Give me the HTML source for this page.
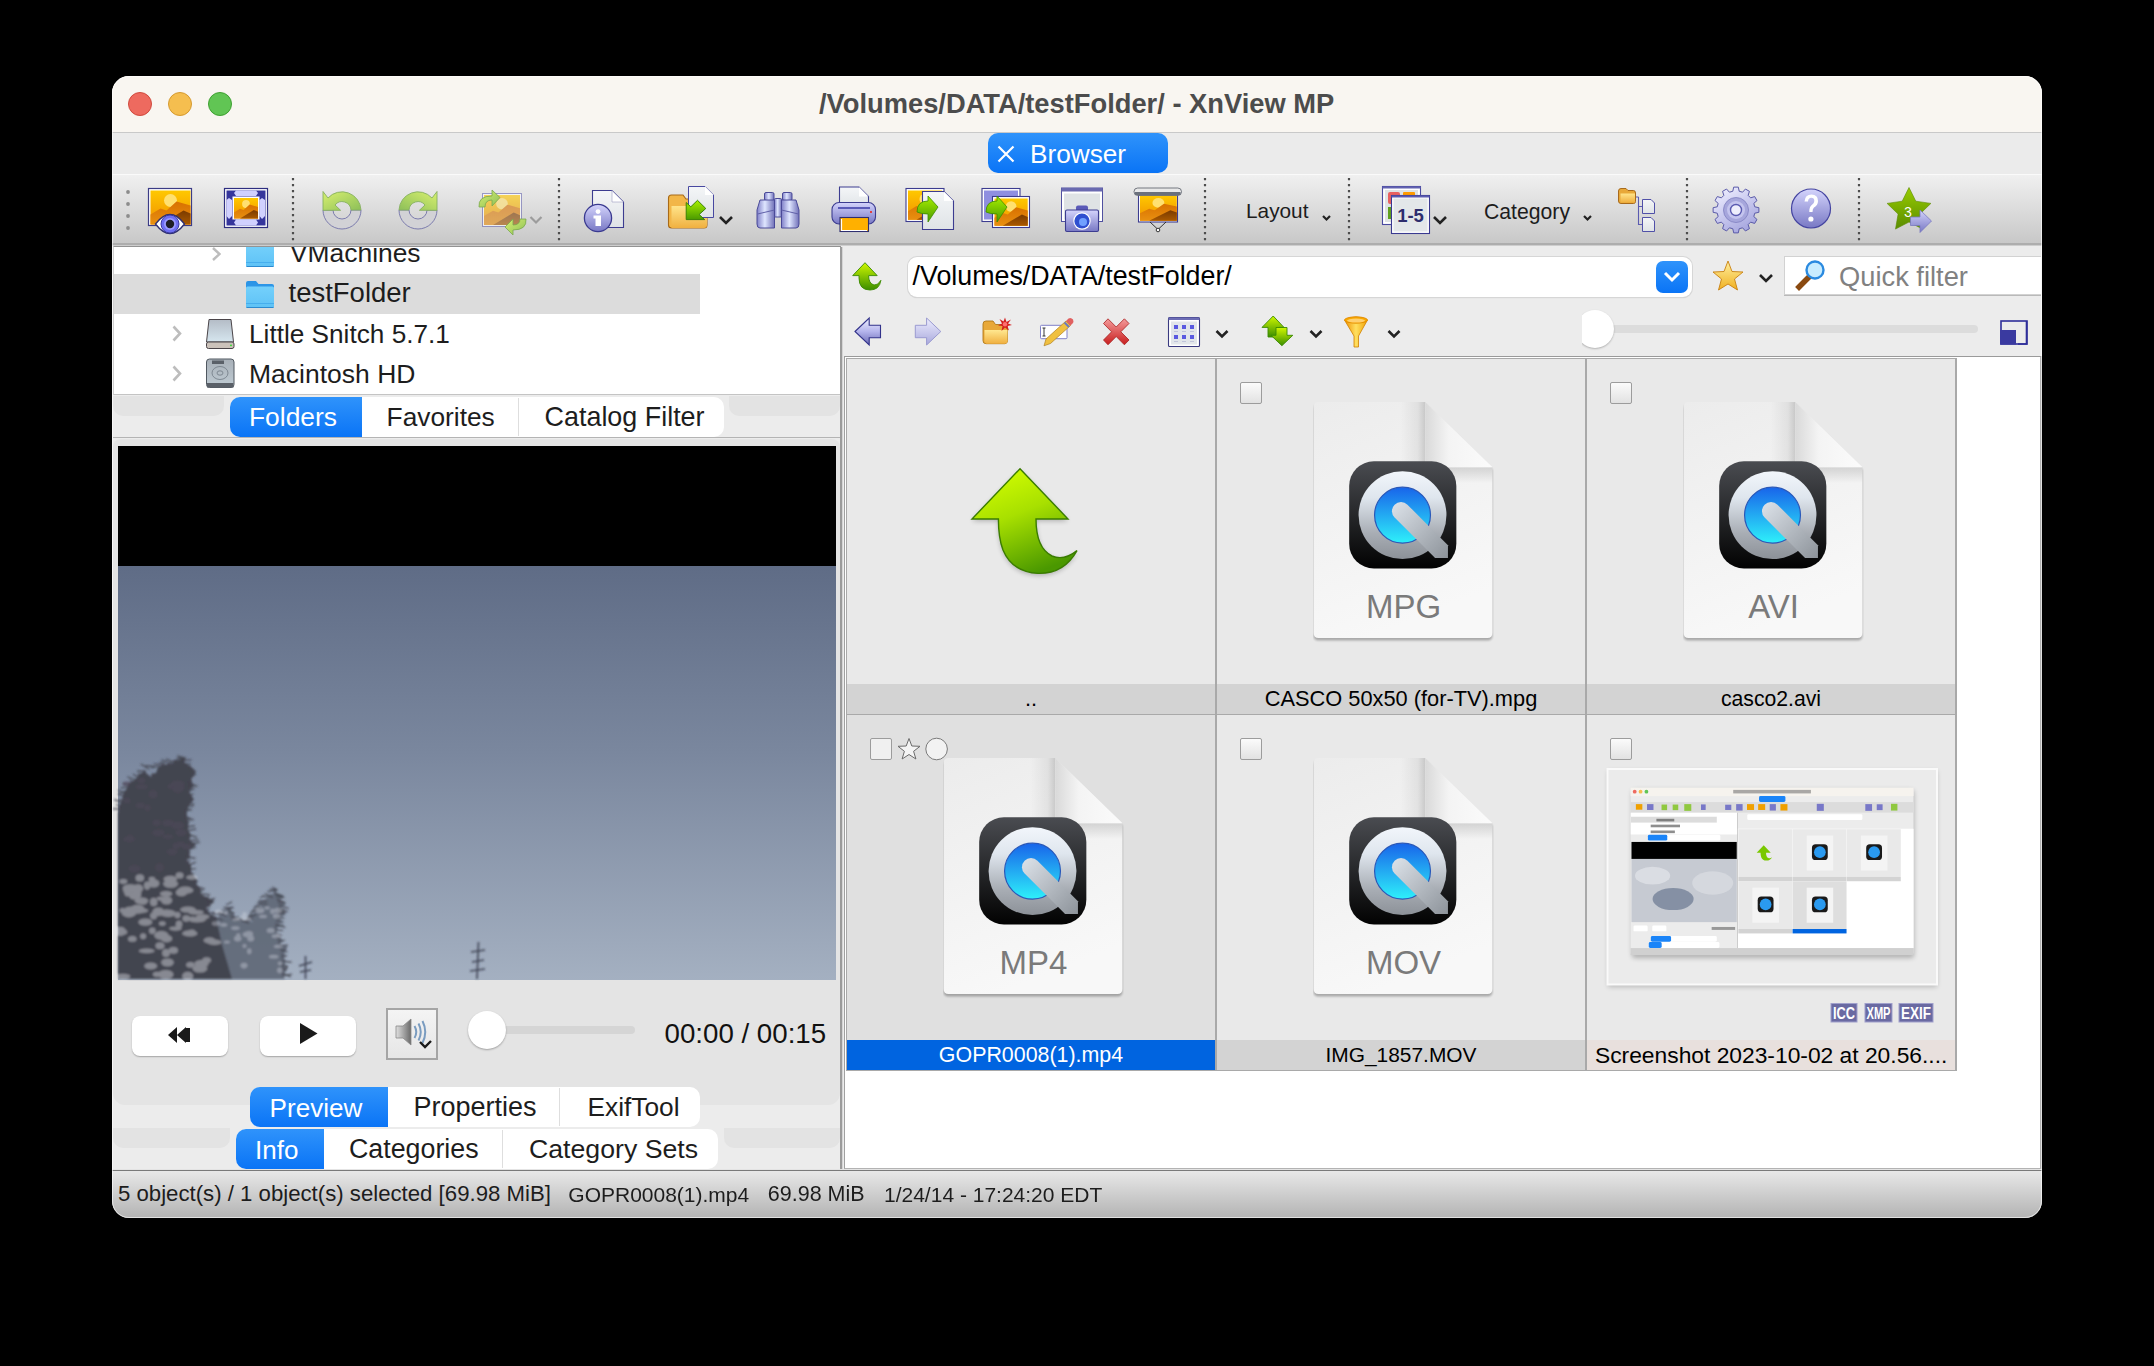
<!DOCTYPE html>
<html><head><meta charset="utf-8">
<style>
*{margin:0;padding:0;box-sizing:border-box}
html,body{width:2154px;height:1366px;background:#000;overflow:hidden;font-family:"Liberation Sans",sans-serif;color:#1d1d1d}
.a{position:absolute}
svg.a{overflow:visible}
#win{position:absolute;left:0;top:0;width:2154px;height:1366px;clip-path:inset(76px 112px 148px 112px round 17px)}
.t{position:absolute;white-space:nowrap;line-height:1}
.blue{background:linear-gradient(#2f93fb,#0a74f6)}
.lbl{position:absolute;height:30px;font-size:21.8px;line-height:30px;text-align:center;white-space:nowrap;color:#000}
.cell{position:absolute;background:#e9e9e9}
.cb{position:absolute;width:22px;height:22px;border:1px solid #9c9c9c;border-radius:2px;background:linear-gradient(#fbfbfb,#e2e2e2)}
.vsep{position:absolute;top:179px;height:62px;border-left:3px dotted #4a4a4a}
</style></head><body>
<svg width="0" height="0" style="position:absolute">
<defs>
  <linearGradient id="gPage" x1="0" y1="0" x2="0.3" y2="1"><stop offset="0" stop-color="#ececec"/><stop offset="1" stop-color="#f8f8f8"/></linearGradient>
  <linearGradient id="gFold" x1="0" y1="0" x2="1" y2="0"><stop offset="0" stop-color="#d9d9d9"/><stop offset="0.35" stop-color="#f4f4f4"/><stop offset="1" stop-color="#fbfbfb"/></linearGradient>
  <linearGradient id="gBlack" x1="0" y1="0" x2="0" y2="1"><stop offset="0" stop-color="#4a4c51"/><stop offset="1" stop-color="#020202"/></linearGradient>
  <linearGradient id="gRing" x1="0" y1="0" x2="0" y2="1"><stop offset="0" stop-color="#f2f6fb"/><stop offset="0.3" stop-color="#dfe6ee"/><stop offset="0.7" stop-color="#a9aeb5"/><stop offset="1" stop-color="#8c9198"/></linearGradient>
  <linearGradient id="gBlue" x1="0" y1="0" x2="0" y2="1"><stop offset="0" stop-color="#1864ea"/><stop offset="1" stop-color="#2ef0fa"/></linearGradient>
  <linearGradient id="gTail" x1="0" y1="0" x2="1" y2="1"><stop offset="0" stop-color="#dde3ea"/><stop offset="1" stop-color="#8d939a"/></linearGradient>
  <linearGradient id="gShadeL" x1="0" y1="0" x2="1" y2="0"><stop offset="0" stop-color="#000" stop-opacity="0"/><stop offset="0.7" stop-color="#000" stop-opacity="0.06"/><stop offset="1" stop-color="#000" stop-opacity="0.16"/></linearGradient>
  <linearGradient id="gShadeB" x1="0" y1="0" x2="0" y2="1"><stop offset="0" stop-color="#000" stop-opacity="0.13"/><stop offset="1" stop-color="#000" stop-opacity="0"/></linearGradient>
  <filter id="dshd" x="-5%" y="-5%" width="110%" height="110%"><feGaussianBlur stdDeviation="1.3"/></filter>
  <symbol id="doc" viewBox="0 0 182 244">
    <path d="M5,0 H113 L181,66 V234 Q181,239 176,239 H5 Q0,239 0,234 V5 Q0,0 5,0 Z" fill="#000" opacity="0.28" transform="translate(0,2.5)" filter="url(#dshd)"/>
    <path d="M5,0 H113 L181,66 V234 Q181,239 176,239 H5 Q0,239 0,234 V5 Q0,0 5,0 Z" fill="url(#gPage)"/>
    <rect x="88" y="0" width="25" height="72" fill="url(#gShadeL)"/>
    <rect x="113" y="66" width="68" height="16" fill="url(#gShadeB)"/>
    <path d="M113,0 L181,66 H118 Q113,66 113,61 Z" fill="url(#gFold)"/>
    <rect x="36" y="60" width="108.5" height="108.5" rx="25" fill="url(#gBlack)"/>
    <circle cx="90" cy="114.5" r="44.5" fill="url(#gRing)"/>
    <circle cx="90" cy="114.5" r="28.3" fill="url(#gBlue)" stroke="#2a58b8" stroke-width="1.2"/>
    <path d="M95,104 L136,145 V158 H123 L82,117 A9,9 0 0 1 95,104 Z" fill="url(#gTail)"/>
  </symbol>
</defs>
</svg>
<div id="win">
  <div class="a" style="left:112px;top:76px;width:1930px;height:1142px;background:#ececec"></div>
  <!-- ============ title bar ============ -->
  <div class="a" style="left:112px;top:76px;width:1930px;height:57px;background:#f9f6f1;border-bottom:1px solid #c9c9c9"></div>
  <div class="a" style="left:128px;top:92px;width:24px;height:24px;border-radius:50%;background:#ee6a5f;border:1px solid #d04a3e"></div>
  <div class="a" style="left:168px;top:92px;width:24px;height:24px;border-radius:50%;background:#f5be4f;border:1px solid #d59a30"></div>
  <div class="a" style="left:208px;top:92px;width:24px;height:24px;border-radius:50%;background:#61c554;border:1px solid #3fa032"></div>
  <div class="t" style="left:819px;top:89.5px;font-size:27.3px;font-weight:bold;color:#4c4c4c">/Volumes/DATA/testFolder/ - XnView MP</div>
  <!-- ============ tab bar ============ -->
  <div class="a" style="left:112px;top:133px;width:1930px;height:41px;background:#ebebeb"></div>
  <div class="a blue" style="left:988px;top:133px;width:180px;height:40px;border-radius:10px"></div>
  <svg class="a" style="left:997px;top:145px" width="18" height="18"><path d="M1.5,1.5 L16.5,16.5 M16.5,1.5 L1.5,16.5" stroke="#fff" stroke-width="2.2"/></svg>
  <div class="t" style="left:1030px;top:140.7px;font-size:26.2px;color:#fff">Browser</div>
  <!-- ============ toolbar ============ -->
  <div class="a" style="left:112px;top:174px;width:1930px;height:71px;background:linear-gradient(#f0f0f0,#c8c8c8);border-top:1px solid #fafafa;border-bottom:2px solid #adadad;box-shadow:0 1px 0 #cdcdcd"></div>
  <svg class="a" style="left:112px;top:174px" width="1930" height="73" viewBox="112 174 1930 73">
    <defs>
      <linearGradient id="tOr" x1="0" y1="0" x2="0" y2="1"><stop offset="0" stop-color="#ffc800"/><stop offset="1" stop-color="#f09000"/></linearGradient>
      <linearGradient id="tM1" x1="0" y1="0" x2="0" y2="1"><stop offset="0" stop-color="#d87000"/><stop offset="1" stop-color="#e89010"/></linearGradient>
      <linearGradient id="tM2" x1="0" y1="0" x2="0" y2="1"><stop offset="0" stop-color="#7a3a00"/><stop offset="1" stop-color="#a85800"/></linearGradient>
      <linearGradient id="tLav" x1="0" y1="0" x2="0" y2="1"><stop offset="0" stop-color="#d4d4fc"/><stop offset="1" stop-color="#7878c4"/></linearGradient>
      <linearGradient id="tLavH" x1="0" y1="0" x2="1" y2="0"><stop offset="0" stop-color="#8080c8"/><stop offset="0.45" stop-color="#dfe6ff"/><stop offset="1" stop-color="#7070b8"/></linearGradient>
      <linearGradient id="tGrn" x1="0" y1="0" x2="1" y2="1"><stop offset="0" stop-color="#d8f070"/><stop offset="1" stop-color="#8cbf58"/></linearGradient>
      <linearGradient id="tGrn2" x1="0" y1="0" x2="0" y2="1"><stop offset="0" stop-color="#a8f000"/><stop offset="1" stop-color="#4a9a00"/></linearGradient>
      <linearGradient id="tDoc" x1="0" y1="0" x2="0" y2="1"><stop offset="0" stop-color="#f4f6f8"/><stop offset="1" stop-color="#dfe3e6"/></linearGradient>
      <linearGradient id="tFold" x1="0" y1="0" x2="0" y2="1"><stop offset="0" stop-color="#ffe48a"/><stop offset="1" stop-color="#f0b040"/></linearGradient>
      <linearGradient id="tGear" x1="0.2" y1="0" x2="0.8" y2="1"><stop offset="0" stop-color="#eeeeff"/><stop offset="1" stop-color="#a0a0dc"/></linearGradient>
      <linearGradient id="tStar" x1="0" y1="0" x2="0" y2="1"><stop offset="0" stop-color="#98cc00"/><stop offset="1" stop-color="#5a8c00"/></linearGradient>
      <g id="tLand">
        <rect x="0" y="0" width="40" height="34" fill="url(#tOr)"/>
        <circle cx="20" cy="10" r="6.5" fill="#ffe070"/>
        <path d="M0,24 L10,18 L16,20 L26,11 L40,15 V34 H0 Z" fill="url(#tM1)"/>
        <path d="M10,34 L33,20 L40,23 V34 Z" fill="url(#tM2)"/>
      </g>
    </defs>
    <!-- grip -->
    <g fill="#8c8c8c"><circle cx="128" cy="192" r="1.9"/><circle cx="128" cy="204" r="1.9"/><circle cx="128" cy="216" r="1.9"/><circle cx="128" cy="228" r="1.9"/></g>
    <!-- separators -->
    <g stroke="#4d4d4d" stroke-width="2.2" stroke-dasharray="2.2 3.8">
      <path d="M293,178 V241"/><path d="M559,178 V241"/><path d="M1205,178 V241"/><path d="M1349,178 V241"/><path d="M1687,178 V241"/><path d="M1859,178 V241"/>
    </g>
    <!-- 1 view -->
    <rect x="148.5" y="188.5" width="43" height="37" fill="#fff" stroke="#3c3c86" stroke-width="1.2"/>
    <g transform="translate(150.5,190.5)"><use href="#tLand"/></g>
    <path d="M155.5,224 Q170,205 184.5,224 Q170,243 155.5,224 Z" fill="#fff" stroke="#2e2e70" stroke-width="1.3"/>
    <circle cx="170" cy="224" r="9" fill="#6e6ef2" stroke="#3838a0" stroke-width="1"/>
    <circle cx="170" cy="224" r="6" fill="#9a9aff"/>
    <circle cx="170" cy="224" r="4.2" fill="#1e1e28"/>
    <!-- 2 fullscreen -->
    <rect x="224.5" y="188.5" width="43" height="39" fill="#fff" stroke="#2e2e80" stroke-width="1.2"/>
    <rect x="226.5" y="190.5" width="39" height="35" fill="#35359c"/>
    <path d="M234,193 L236,190.5 H256 L258,193 L256,196 H236 Z M234,222.5 L236,219.5 H256 L258,222.5 L256,225.5 H236 Z M229,198 L226.5,200 V216 L229,219 L232,216 V200 Z M262,198 L259.5,200 V216 L262,219 L265,216 V200 Z" fill="#d0d0fe"/>
    <rect x="232.5" y="196.5" width="27" height="23" fill="#fff"/>
    <g transform="translate(234,198) scale(0.6,0.6)"><use href="#tLand"/></g>
    <!-- 3 rotate left -->
    <g>
      <path d="M323,210 A19,19 0 0 0 361,210 H351 A9,9 0 0 1 333,210 Z" fill="#d2d2d6" stroke="#7272a8" stroke-width="0.9"/>
      <path d="M323,191.5 L328,198 A19,19 0 0 1 361,210 H351 A9,9 0 0 0 335,205 L340.6,210.3 H323 Z" fill="url(#tGrn)" stroke="#86b060" stroke-width="0.9"/>
    </g>
    <g transform="translate(760,0) scale(-1,1)">
      <path d="M323,210 A19,19 0 0 0 361,210 H351 A9,9 0 0 1 333,210 Z" fill="#d2d2d6" stroke="#7272a8" stroke-width="0.9"/>
      <path d="M323,191.5 L328,198 A19,19 0 0 1 361,210 H351 A9,9 0 0 0 335,205 L340.6,210.3 H323 Z" fill="url(#tGrn)" stroke="#86b060" stroke-width="0.9"/>
    </g>
    <!-- 4 rotate-image (disabled look) -->
    <g opacity="0.62">
      <rect x="482.5" y="193.5" width="39" height="33" fill="#fff" stroke="#6a6ab0" stroke-width="1"/>
      <g transform="translate(484,195) scale(0.9,0.88)"><use href="#tLand"/></g>
    </g>
    <path d="M479,207 Q478,196 492,196 V190 L500,197.5 L492,206 V200 Q485,200 485,207 Z" fill="url(#tGrn)" stroke="#7aa850" stroke-width="0.8"/>
    <path d="M526,219 Q527,230 513,230 V235 L505,227 L513,219 V225 Q520,225 520,219 Z" fill="url(#tGrn)" stroke="#7aa850" stroke-width="0.8"/>
    <path d="M530.5,217 L536,222.5 L541.5,217" stroke="#9c9c9c" stroke-width="2.2" fill="none"/>
    <!-- 5 info -->
    <path d="M592.5,190.5 H612 L623.5,202 V227.5 H592.5 Z" fill="url(#tDoc)" stroke="#3c3c90" stroke-width="1.1"/>
    <path d="M612,190.5 V202 H623.5 Z" fill="#fff" stroke="#9a9ac0" stroke-width="0.6"/>
    <circle cx="598" cy="218" r="13.6" fill="url(#tLav)" stroke="#3a3a90" stroke-width="1.3"/>
    <circle cx="598" cy="211.6" r="2.4" fill="#fff"/>
    <path d="M593.5,215.5 H601 V226 H595.5 V218.5 H593.5 Z" fill="#fff"/>
    <!-- 6 folder import -->
    <path d="M668.5,198 Q668.5,195 671.5,195 H683 L686,199 H704 Q707,199 707,202 V225 Q707,228 704,228 H671.5 Q668.5,228 668.5,225 Z" fill="#f2b648" stroke="#a86a18" stroke-width="1.1"/>
    <path d="M671.5,206 H707 V225 Q707,228 704,228 H671.5 Z" fill="url(#tFold)"/>
    <path d="M688.5,186.5 H705 L713.5,195 V217.5 H688.5 Z" fill="url(#tDoc)" stroke="#4848a0" stroke-width="1"/>
    <path d="M705,186.5 V195 H713.5 Z" fill="#fff"/>
    <path d="M686.2,202.5 L690.8,206.8 L697.5,200.3 L705.8,208.5 L699.2,214.5 L704.7,219.6 H686.2 Z" fill="url(#tGrn2)" stroke="#2e7a00" stroke-width="0.9"/>
    <path d="M720,217 L726,223 L732,217" stroke="#222" stroke-width="2.6" fill="none"/>
    <!-- 7 binoculars -->
    <g fill="url(#tLavH)" stroke="#4a4a98" stroke-width="1">
      <rect x="764.5" y="192.5" width="9.5" height="8" rx="1.5"/>
      <rect x="782.5" y="192.5" width="9.5" height="8" rx="1.5"/>
      <path d="M760,200 H774.5 V228 H760 Q757,228 757,224 V210 Z"/>
      <path d="M796,200 H781.5 V228 H796 Q799,228 799,224 V210 Z"/>
      <rect x="774.5" y="198.5" width="7" height="18.5" rx="1"/>
    </g>
    <path d="M757.5,214 L774.5,210 M798.5,214 L781.5,210" stroke="#6060a8" stroke-width="1"/>
    <!-- 8 printer -->
    <path d="M839.5,187 H859 L868.5,196.5 V208 H839.5 Z" fill="url(#tDoc)" stroke="#3c3c90" stroke-width="1.1"/>
    <path d="M859,187 V196.5 H868.5 Z" fill="#fff"/>
    <rect x="832" y="202.5" width="43.5" height="21.5" rx="7" fill="url(#tLav)" stroke="#3c3c90" stroke-width="1.1"/>
    <path d="M838,208 H870" stroke="#5a5ab8" stroke-width="1.8"/>
    <rect x="870" y="211" width="2" height="2" fill="#e04040"/>
    <rect x="840" y="217.5" width="28.5" height="14" fill="#ffb000" stroke="#2e2e70" stroke-width="1.1"/>
    <path d="M841.5,219 V230.5 H867" stroke="#fff" stroke-width="1.2" fill="none"/>
    <!-- 9 convert -->
    <rect x="906" y="188.5" width="38" height="33" fill="#fff" stroke="#3c3c90" stroke-width="1.1"/>
    <g transform="translate(908,190.5) scale(0.85,0.86)"><use href="#tLand"/></g>
    <path d="M922.5,191.5 H944 L953.5,201 V229.5 H922.5 Z" fill="url(#tDoc)" stroke="#3c3c90" stroke-width="1.1"/>
    <path d="M944,191.5 V201 H953.5 Z" fill="#fff"/>
    <path d="M917,212 Q917,201 928,201 V196 L938,207 L928,222 V214 Q921,214 917,212 Z" fill="url(#tGrn2)" stroke="#3c8a00" stroke-width="0.8"/>
    <!-- 10 batch convert -->
    <rect x="982" y="188.5" width="38" height="33" fill="#fff" stroke="#3c3c90" stroke-width="1.1"/>
    <rect x="984" y="190.5" width="34" height="29" fill="#8f8fe0"/>
    <rect x="992.5" y="196.5" width="37" height="31" fill="#fff" stroke="#3c3c90" stroke-width="1.1"/>
    <g transform="translate(994.5,198.5) scale(0.83,0.8)"><use href="#tLand"/></g>
    <path d="M986,212 Q986,201 997,201 V196 L1007,207 L997,222 V214 Q990,214 986,212 Z" fill="url(#tGrn2)" stroke="#3c8a00" stroke-width="0.8"/>
    <!-- 11 screenshot -->
    <rect x="1061.5" y="188" width="41" height="33.5" fill="#fff" stroke="#5050a0" stroke-width="1"/>
    <rect x="1061.5" y="188" width="41" height="3.5" fill="#6a6ab0"/>
    <rect x="1064" y="193.5" width="36" height="26" fill="#dfe3e5"/>
    <rect x="1076" y="205.5" width="12" height="6" rx="2" fill="#5a5ab8"/>
    <rect x="1065.5" y="210" width="33" height="21.5" rx="1.5" fill="url(#tLav)" stroke="#3c3c90" stroke-width="1.1"/>
    <circle cx="1082" cy="221" r="8.7" fill="#fff"/>
    <circle cx="1082" cy="221" r="7.6" fill="#2f4fd0"/>
    <circle cx="1083" cy="222" r="4" fill="#70a0ff"/>
    <!-- 12 slideshow -->
    <rect x="1138.5" y="194" width="39" height="28" fill="#fff" stroke="#3c3c90" stroke-width="1.1"/>
    <g transform="translate(1140,195.5) scale(0.92,0.74)"><use href="#tLand"/></g>
    <rect x="1134" y="188" width="47.5" height="7.5" rx="3.7" fill="#e8e8e8" stroke="#555a66" stroke-width="0.8"/>
    <rect x="1135" y="192" width="45.5" height="3" fill="#6a707c"/>
    <path d="M1150,222 L1158,229.5 L1166,222" stroke="#222" stroke-width="0.9" fill="none"/>
    <circle cx="1158" cy="230" r="1.8" fill="#fff" stroke="#222" stroke-width="0.9"/>
    <!-- chevrons for Layout / Category -->
    <path d="M1323,216 L1326.5,219.5 L1330,216" stroke="#222" stroke-width="2.2" fill="none"/>
    <path d="M1584,216 L1587.5,219.5 L1591,216" stroke="#222" stroke-width="2.2" fill="none"/>
    <!-- 13 1-5 -->
    <rect x="1382.5" y="186.5" width="38" height="38" fill="#fff" stroke="#4a4aa0" stroke-width="1.1"/>
    <rect x="1382.5" y="186.5" width="38" height="2" fill="#6262b0"/>
    <rect x="1385" y="190" width="33" height="32" fill="#dfe3e5"/>
    <rect x="1388" y="192" width="12" height="12" rx="2" fill="#e86060"/>
    <rect x="1403" y="192" width="12" height="4" rx="1" fill="#ff9a00"/>
    <rect x="1388" y="207" width="4" height="12" fill="#60a020"/>
    <rect x="1391.5" y="195.5" width="38" height="38" fill="#fff" stroke="#3a3a90" stroke-width="1.1"/>
    <rect x="1391.5" y="195.5" width="38" height="2" fill="#5a5ab0"/>
    <rect x="1393.5" y="198.5" width="34" height="33" fill="#e3e7e9"/>
    <text x="1410.5" y="222" font-family="Liberation Sans" font-weight="bold" font-size="18.5" fill="#2e2e6e" text-anchor="middle">1-5</text>
    <path d="M1434,217 L1440,223 L1446,217" stroke="#222" stroke-width="2.6" fill="none"/>
    <!-- 14 folder tree -->
    <path d="M1638.5,197 V224.5 H1642.5 M1638.5,206.5 H1642.5 M1636,197 H1638.5" stroke="#5a5ab0" stroke-width="1.1" fill="none"/>
    <path d="M1618.5,191 Q1618.5,188.5 1621,188.5 H1626 L1628,190.5 H1633.5 Q1635.5,190.5 1635.5,193 V201.5 Q1635.5,203.5 1633.5,203.5 H1621 Q1618.5,203.5 1618.5,201 Z" fill="#e8a838" stroke="#a06010" stroke-width="0.9"/>
    <rect x="1620.5" y="193.5" width="14.5" height="9" fill="url(#tFold)"/>
    <path d="M1642.5,199.5 H1651 L1654.5,203 V213.5 H1642.5 Z" fill="url(#tDoc)" stroke="#5050a8" stroke-width="1"/>
    <path d="M1642.5,217.5 H1651 L1654.5,221 V231.5 H1642.5 Z" fill="url(#tDoc)" stroke="#5050a8" stroke-width="1"/>
    <!-- 15 gear -->
    <g transform="translate(1736,210)">
      <path d="M-3.21,-18.73 L-2.30,-22.89 L2.30,-22.89 L3.21,-18.73 L6.58,-17.82 L9.45,-20.97 L13.43,-18.67 L12.15,-14.61 L14.61,-12.15 L18.67,-13.43 L20.97,-9.45 L17.82,-6.58 L18.73,-3.21 L22.89,-2.30 L22.89,2.30 L18.73,3.21 L17.82,6.58 L20.97,9.45 L18.67,13.43 L14.61,12.15 L12.15,14.61 L13.43,18.67 L9.45,20.97 L6.58,17.82 L3.21,18.73 L2.30,22.89 L-2.30,22.89 L-3.21,18.73 L-6.58,17.82 L-9.45,20.97 L-13.43,18.67 L-12.15,14.61 L-14.61,12.15 L-18.67,13.43 L-20.97,9.45 L-17.82,6.58 L-18.73,3.21 L-22.89,2.30 L-22.89,-2.30 L-18.73,-3.21 L-17.82,-6.58 L-20.97,-9.45 L-18.67,-13.43 L-14.61,-12.15 L-12.15,-14.61 L-13.43,-18.67 L-9.45,-20.97 L-6.58,-17.82 Z" fill="url(#tGear)" stroke="#5a5aa8" stroke-width="1"/>
      <circle r="12.5" fill="#a6a6dc" stroke="#8080c0" stroke-width="0.8"/>
      <circle r="9" fill="#c4c4ee"/>
      <circle r="5.5" fill="#eeeefc" stroke="#5a5ab0" stroke-width="1.4"/>
    </g>
    <!-- 16 help -->
    <circle cx="1811" cy="208.5" r="19.5" fill="url(#tLav)" stroke="#4444a0" stroke-width="1.2"/>
    <path d="M1804.5,201.5 Q1805,194.5 1811.5,194.5 Q1818,194.5 1818,201 Q1818,205 1814,207.5 Q1812.5,208.5 1812.5,212 H1809.3 Q1809,207 1812,204.7 Q1814.3,203 1814.3,201 Q1814.3,197.8 1811.3,197.8 Q1808.3,197.8 1808,201.5 Z" fill="#fff"/>
    <circle cx="1810.9" cy="219" r="2.6" fill="#fff"/>
    <!-- 17 star -->
    <path d="M1909.0,187.5 L1915.8,201.2 L1930.9,203.4 L1919.9,214.1 L1922.5,229.1 L1909.0,222.0 L1895.5,229.1 L1898.1,214.1 L1887.1,203.4 L1902.2,201.2 Z" fill="url(#tStar)" stroke="#5a8a00" stroke-width="0.6"/>
    <text x="1908" y="217" font-family="Liberation Mono" font-size="14" fill="#fff" text-anchor="middle">3</text>
    <path d="M1910.5,217 H1920 V210 L1931.5,221 L1920,232.5 V225.5 H1910.5 Z" fill="url(#tLav)" stroke="#7a7ac0" stroke-width="0.8"/>
  </svg>
  <div class="t" style="left:1246px;top:201.3px;font-size:20.8px">Layout</div>
  <div class="t" style="left:1484px;top:201px;font-size:21.2px">Category</div>
  <!-- ============ left tree ============ -->
  <div class="a" style="left:113px;top:246px;width:728px;height:149px;background:#fff;border-top:1px solid #939393;border-bottom:1px solid #c4c4c4;border-left:1px solid #d0d0d0"></div>
  <div class="a" style="left:114px;top:274px;width:586px;height:40px;background:#dcdcdc"></div>
  <div class="a" style="left:113px;top:247px;width:727px;height:147px;overflow:hidden">
    <div class="t" style="left:177px;top:-6.8px;font-size:26.4px">VMachines</div>
    <div class="t" style="left:175.5px;top:32.4px;font-size:27.5px">testFolder</div>
    <div class="t" style="left:136px;top:73.5px;font-size:26.2px">Little Snitch 5.7.1</div>
    <div class="t" style="left:136px;top:113.5px;font-size:26.5px">Macintosh HD</div>
    <svg class="a" style="left:0;top:0" width="727" height="147" viewBox="113 247 727 147">
      <defs>
        <linearGradient id="fBack" x1="0" y1="0" x2="0" y2="1"><stop offset="0" stop-color="#2a93e6"/><stop offset="1" stop-color="#3aa6ee"/></linearGradient>
        <linearGradient id="fFront" x1="0" y1="0" x2="0" y2="1"><stop offset="0" stop-color="#74d0fb"/><stop offset="1" stop-color="#5ec2f6"/></linearGradient>
        <linearGradient id="dSil" x1="0" y1="0" x2="0" y2="1"><stop offset="0" stop-color="#b4bcc6"/><stop offset="1" stop-color="#d6e6ef"/></linearGradient>
        <linearGradient id="hSil" x1="0" y1="0" x2="0" y2="1"><stop offset="0" stop-color="#a8b0b8"/><stop offset="1" stop-color="#c0ccd4"/></linearGradient>
        <g id="bfold">
          <path d="M0,2 Q0,0 2,0 H10 L12.5,3 H26 Q28,3 28,5 V25 Q28,27 26,27 H2 Q0,27 0,25 Z" fill="url(#fBack)"/>
          <path d="M0,7 Q0,5.5 1.5,5.5 H26.5 Q28,5.5 28,7 V25 Q28,27 26,27 H2 Q0,27 0,25 Z" fill="url(#fFront)"/>
          <path d="M0,22.5 H28" stroke="#3fa8ea" stroke-width="0.8"/>
          <path d="M0.5,26.5 H27.5" stroke="#2b8ad0" stroke-width="1"/>
        </g>
      </defs>
      <path d="M213,248 L219.5,254 L213,260" stroke="#bdbdbd" stroke-width="2.4" fill="none"/>
      <g transform="translate(246,240)"><use href="#bfold"/></g>
      <g transform="translate(246,281)"><use href="#bfold"/></g>
      <path d="M173.5,326.5 L180,333.5 L173.5,340.5" stroke="#bdbdbd" stroke-width="2.6" fill="none"/>
      <path d="M173.5,366.5 L180,373.5 L173.5,380.5" stroke="#bdbdbd" stroke-width="2.6" fill="none"/>
      <path d="M209,319.5 H231 L233.5,342 H206.5 Z" fill="url(#dSil)" stroke="#4a4448" stroke-width="1"/>
      <rect x="206.5" y="342" width="27.5" height="6.5" rx="2" fill="#cbc2ba" stroke="#4a4448" stroke-width="1"/>
      <circle cx="231" cy="345.3" r="0.9" fill="#20e020"/>
      <rect x="206.5" y="359" width="27.5" height="28.5" rx="3" fill="url(#hSil)" stroke="#505860" stroke-width="1"/>
      <rect x="212" y="360.5" width="12" height="3.5" fill="#5a6068"/>
      <ellipse cx="220" cy="373" rx="8" ry="6.5" fill="none" stroke="#707a84" stroke-width="0.8"/>
      <ellipse cx="220" cy="373" rx="3" ry="2.2" fill="none" stroke="#707a84" stroke-width="0.8"/>
      <rect x="207" y="383" width="26.5" height="4.5" fill="#5a6068"/>
    </svg>
  </div>
  <!-- ============ left tabs ============ -->
  <div class="a" style="left:113px;top:396px;width:111px;height:20px;background:#e3e3e3;border-radius:0 0 10px 10px"></div>
  <div class="a" style="left:729px;top:396px;width:111px;height:20px;background:#e3e3e3;border-radius:0 0 10px 10px"></div>
  <div class="a" style="left:230px;top:397px;width:494px;height:40px;border-radius:10px;background:#fff"></div>
  <div class="a blue" style="left:230px;top:397px;width:132px;height:40px;border-radius:10px 0 0 10px"></div>
  <div class="a" style="left:518px;top:398px;width:1px;height:38px;background:#dedede"></div>
  <div class="t" style="left:249px;top:404.4px;font-size:26.4px;color:#fff">Folders</div>
  <div class="t" style="left:386.6px;top:404.4px;font-size:26.3px">Favorites</div>
  <div class="t" style="left:544.6px;top:403.9px;font-size:26.9px">Catalog Filter</div>
  <!-- ============ preview panel ============ -->
  <div class="a" style="left:113px;top:437px;width:727px;height:1px;background:#b4b4b4"></div>
  <div class="a" style="left:113px;top:439px;width:727px;height:666px;background:#e4e4e4;border-radius:8px 8px 12px 12px"></div>
  <div class="a" style="left:118px;top:446px;width:718px;height:120px;background:#000"></div>
  <div class="a" style="left:118px;top:566px;width:718px;height:414px;background:linear-gradient(#5f6c86,#7a879e 45%,#a4b0c1)"></div>
  <svg class="a" style="left:118px;top:566px" width="718" height="414" viewBox="118 566 718 414">
    <defs><filter id="tblur"><feGaussianBlur stdDeviation="0.8"/></filter></defs>
    <g filter="url(#tblur)">
    <path d="M190,979 L190,912 219.2,917.8 L218.3,913.2 L227.4,912.5 L223.2,908.9 L233.9,905.7 L230.0,909.7 L234.5,912.9 L234.2,918.3 L237.9,920.2 L249.1,920.2 L253.6,922.5 L247.6,916.8 L254.3,912.5 L254.9,908.6 L261.7,906.9 L258.0,901.8 L266.9,898.9 L265.7,895.7 L274.5,893.3 L269.7,889.7 L276.1,887.9 L275.8,892.4 L284.3,895.7 L279.0,901.8 L286.3,904.0 L280.8,908.1 L285.8,914.3 L279.1,918.5 L284.5,922.1 L276.8,926.0 L277.8,928.5 L275.5,934.8 L283.0,940.1 L279.9,944.3 L287.6,946.7 L285.5,951.4 L283.4,956.8 L285.9,960.8 L284.1,966.7 L286.8,969.9 L283.1,975.7 L285.0,979.0 Z" fill="#5e6676" opacity="0.9"/>
    <path d="M185.5,758.3 L184.2,762.5 L193.5,768.7 L195.4,772.5 L191.3,779.1 L193.2,786.5 L188.9,791.4 L193.9,799.5 L188.9,805.4 L186.8,810.9 L186.9,818.8 L188.6,823.2 L188.0,830.1 L190.4,833.8 L189.6,840.2 L196.1,845.1 L189.3,849.7 L189.8,857.2 L186.6,860.0 L190.9,865.2 L191.4,873.0 L196.9,879.3 L196.5,884.3 L200.8,889.2 L200.6,894.2 L209.6,898.7 L214.4,901.7 L205.8,908.3 L209.4,912.9 L209.5,914.2 L216.0,917.0 L222,945 L232,979 L118,979 L118,812 118.4,812.4 L118.9,806.7 L120.8,803.0 L122.4,798.7 L123.0,794.6 L125.4,790.9 L127.1,788.1 L128.8,782.9 L134.0,780.5 L137.5,776.9 L137.8,776.0 L144.9,771.0 L146.3,773.3 L151.4,777.3 L151.3,773.7 L156.1,772.9 L157.9,767.2 L164.2,763.6 L164.9,765.0 L173.5,762.8 L173.5,760.4 L178.7,760.2 L182.0,758.0 Z" fill="#43444f"/>
    <path d="M179.0,758.0 l7.2,0.1 M181.2,760.8 l10.4,-0.9 M183.4,763.6 l7.5,0.3 M185.6,766.4 l5.3,-0.2 M187.8,769.2 l8.1,2.3 M190.0,772.0 l4.5,-1.2 M189.2,775.2 l4.4,1.3 M188.5,778.5 l7.5,-4.7 M187.8,781.8 l9.7,4.8 M187.0,785.0 l8.6,0.7 M187.5,788.5 l4.3,-2.8 M188.0,792.0 l6.6,-3.9 M188.5,795.5 l5.0,-1.7 M189.0,799.0 l4.2,-0.4 M187.5,802.2 l6.7,2.3 M186.0,805.5 l7.6,0.8 M184.5,808.8 l7.4,1.0 M183.0,812.0 l6.9,-2.1 M183.5,815.0 l9.7,5.2 M184.0,818.0 l9.7,1.8 M184.5,821.0 l5.8,-2.1 M185.0,824.0 l5.2,-3.0 M185.7,827.3 l9.2,-1.5 M186.3,830.7 l9.8,-1.7 M187.0,834.0 l10.1,3.5 M187.7,837.3 l3.7,-1.4 M188.3,840.7 l10.3,-0.9 M189.0,844.0 l10.7,-1.8 M188.0,847.0 l4.5,0.4 M187.0,850.0 l9.0,-2.8 M186.0,853.0 l4.5,-1.1 M185.0,856.0 l10.5,2.5 M185.7,859.3 l4.6,-1.6 M186.3,862.7 l4.1,-2.4 M187.0,866.0 l8.8,-3.8 M188.0,869.5 l7.9,-0.9 M189.0,873.0 l5.2,1.1 M190.0,876.5 l4.9,0.5 M191.0,880.0 l4.8,-0.7 M192.7,883.0 l5.2,-1.6 M194.3,886.0 l10.4,3.0 M196.0,889.0 l5.7,2.2 M198.0,891.3 l5.4,-0.9 M200.0,893.7 l9.9,1.1 M202.0,896.0 l4.2,2.2 M204.0,898.3 l5.2,-1.7 M206.0,900.7 l9.1,-2.2 M208.0,903.0 l5.3,-3.0 M206.0,906.0 l4.6,0.2 M204.0,909.0 l5.7,0.3 M202.0,912.0 l6.6,-0.7 M204.8,913.2 l10.7,-0.7 M207.5,914.5 l7.5,2.8 M210.2,915.8 l4.8,-2.2 M213.0,917.0 l9.9,3.1 M215.6,914.6 l5.3,-2.2 M218.2,912.2 l8.3,3.9 M220.8,909.8 l4.9,2.3 M223.4,907.4 l10.2,0.6 M226.0,905.0 l6.1,-3.2 M227.2,908.5 l3.8,1.9 M228.5,912.0 l5.6,1.0 M229.8,915.5 l5.5,1.7 M231.0,919.0 l7.9,-2.2 M234.5,919.5 l5.1,1.0 M238.0,920.0 l4.2,-1.5 M241.5,920.5 l7.5,2.6 M245.0,921.0 l7.9,-2.4 M246.7,918.4 l9.7,-3.8 M248.3,915.9 l3.9,-1.2 M250.0,913.3 l6.1,-3.6 M251.7,910.8 l5.1,-1.0 M253.3,908.2 l7.2,-3.5 M255.0,905.7 l6.1,2.4 M256.7,903.1 l10.8,1.3 M258.3,900.6 l8.8,0.4 M260.0,898.0 l4.2,-2.7 M262.4,895.8 l3.8,1.6 M264.8,893.6 l8.0,3.9 M267.2,891.4 l4.1,0.4 M269.6,889.2 l7.2,1.5 M272.0,887.0 l5.5,3.0 M273.2,890.0 l4.5,0.0 M274.3,893.0 l8.5,3.5 M275.5,896.0 l9.0,1.6 M276.7,899.0 l8.8,3.8 M277.8,902.0 l6.4,1.0 M279.0,905.0 l9.7,3.6 M278.4,908.1 l6.7,1.8 M277.8,911.2 l10.0,0.3 M277.1,914.4 l8.2,-1.5 M276.5,917.5 l8.1,0.6 M275.9,920.6 l4.5,0.5 M275.2,923.8 l10.2,3.9 M274.6,926.9 l9.0,-1.6 M274.0,930.0 l9.1,0.4 M275.0,933.1 l6.7,2.2 M276.0,936.3 l4.5,1.0 M277.0,939.4 l4.2,0.3 M278.0,942.6 l6.9,-2.5 M279.0,945.7 l8.9,-0.5 M280.0,948.9 l7.6,3.3 M281.0,952.0 l4.8,-3.2 M281.1,955.0 l6.0,0.9 M281.2,958.0 l5.0,-2.2 M281.3,961.0 l10.3,1.3 M281.4,964.0 l6.6,2.6 M281.6,967.0 l6.2,0.8 M281.7,970.0 l5.3,-0.7 M281.8,973.0 l8.9,3.8 M281.9,976.0 l10.0,-1.8 M185.0,758.0 l-7.8,-2.0 M181.6,758.8 l-4.9,-0.3 M178.2,759.6 l-9.3,3.2 M174.8,760.4 l-8.1,3.9 M171.4,761.2 l-5.4,-2.4 M168.0,762.0 l-6.8,-2.1 M165.0,763.2 l-5.4,-0.8 M162.0,764.4 l-8.4,-0.5 M159.0,765.6 l-5.9,2.0 M156.0,766.8 l-10.8,-1.1 M153.0,768.0 l-3.8,-2.4 M149.5,769.5 l-8.6,-5.3 M146.0,771.0 l-9.0,0.2 M143.7,773.3 l-5.9,1.6 M141.3,775.7 l-3.7,-1.8 M139.0,778.0 l-6.0,-3.9 M136.5,780.2 l-9.2,-3.3 M134.0,782.5 l-4.3,-2.6 M131.5,784.8 l-8.4,-0.9 M129.0,787.0 l-8.3,1.0 M127.5,790.2 l-8.7,4.2 M126.0,793.5 l-8.2,-3.3 M124.5,796.8 l-6.7,-2.9 M123.0,800.0 l-4.1,-0.3 M122.5,803.0 l-8.3,-3.5 M122.0,806.0 l-5.8,-1.3 M121.5,809.0 l-8.9,-0.2" stroke="#43444f" stroke-width="1.4" fill="none" opacity="0.85"/>
    <g fill="#50485a" opacity="0.6"><ellipse cx="171.7" cy="786.4" rx="4.0" ry="2.3"/><ellipse cx="178.0" cy="787.6" rx="6.5" ry="3.3"/><ellipse cx="140.3" cy="805.4" rx="4.2" ry="2.9"/><ellipse cx="153.1" cy="794.2" rx="4.1" ry="3.9"/><ellipse cx="159.5" cy="867.5" rx="4.0" ry="3.9"/><ellipse cx="147.5" cy="807.9" rx="3.0" ry="2.8"/><ellipse cx="156.7" cy="822.7" rx="3.8" ry="3.0"/><ellipse cx="141.6" cy="780.4" rx="3.4" ry="2.8"/><ellipse cx="126.4" cy="783.8" rx="4.2" ry="2.5"/><ellipse cx="158.3" cy="832.7" rx="6.0" ry="3.3"/><ellipse cx="180.4" cy="844.4" rx="4.6" ry="2.7"/><ellipse cx="134.4" cy="868.6" rx="5.9" ry="3.3"/><ellipse cx="177.6" cy="783.9" rx="6.6" ry="3.3"/><ellipse cx="176.2" cy="846.0" rx="3.6" ry="3.0"/><ellipse cx="177.6" cy="825.4" rx="6.2" ry="3.7"/><ellipse cx="181.2" cy="832.6" rx="5.7" ry="3.4"/><ellipse cx="127.0" cy="800.7" rx="3.5" ry="2.7"/><ellipse cx="177.7" cy="789.4" rx="5.2" ry="3.3"/><ellipse cx="167.9" cy="836.4" rx="5.0" ry="2.0"/><ellipse cx="172.1" cy="851.8" rx="5.0" ry="3.1"/><ellipse cx="129.2" cy="839.3" rx="5.9" ry="2.5"/><ellipse cx="141.7" cy="786.7" rx="5.9" ry="2.4"/><ellipse cx="186.5" cy="846.6" rx="5.0" ry="2.8"/><ellipse cx="168.1" cy="823.1" rx="6.1" ry="3.2"/><ellipse cx="129.9" cy="837.8" rx="3.6" ry="2.5"/></g>
    <g fill="#e6e9f0" opacity="0.42"><ellipse cx="131.1" cy="908.7" rx="6.3" ry="2.2"/><ellipse cx="152.3" cy="930.7" rx="3.3" ry="3.3"/><ellipse cx="151.9" cy="878.9" rx="3.3" ry="2.2"/><ellipse cx="192.6" cy="919.1" rx="3.6" ry="2.6"/><ellipse cx="209.5" cy="940.3" rx="5.9" ry="3.0"/><ellipse cx="123.0" cy="976.5" rx="7.3" ry="2.7"/><ellipse cx="127.6" cy="890.0" rx="4.5" ry="4.0"/><ellipse cx="166.1" cy="893.8" rx="6.2" ry="2.9"/><ellipse cx="123.9" cy="932.0" rx="3.3" ry="2.5"/><ellipse cx="160.0" cy="945.8" rx="4.6" ry="3.5"/><ellipse cx="145.3" cy="922.1" rx="7.0" ry="3.7"/><ellipse cx="166.6" cy="900.4" rx="5.6" ry="4.2"/><ellipse cx="146.7" cy="950.9" rx="7.9" ry="2.3"/><ellipse cx="186.2" cy="918.5" rx="3.8" ry="3.2"/><ellipse cx="170.3" cy="879.1" rx="6.8" ry="3.4"/><ellipse cx="150.7" cy="966.0" rx="6.5" ry="3.5"/><ellipse cx="161.4" cy="935.3" rx="7.2" ry="4.4"/><ellipse cx="179.0" cy="924.3" rx="3.3" ry="3.8"/><ellipse cx="214.5" cy="942.3" rx="7.1" ry="2.7"/><ellipse cx="177.5" cy="915.1" rx="3.1" ry="3.2"/><ellipse cx="127.6" cy="892.5" rx="3.3" ry="3.9"/><ellipse cx="138.1" cy="888.5" rx="5.0" ry="4.2"/><ellipse cx="153.7" cy="883.4" rx="5.7" ry="4.2"/><ellipse cx="206.6" cy="960.2" rx="4.4" ry="3.0"/><ellipse cx="196.0" cy="912.3" rx="7.8" ry="2.4"/><ellipse cx="137.1" cy="893.3" rx="4.2" ry="3.2"/><ellipse cx="143.1" cy="936.3" rx="3.0" ry="3.0"/><ellipse cx="168.1" cy="913.4" rx="7.8" ry="3.7"/><ellipse cx="175.5" cy="928.6" rx="6.4" ry="2.1"/><ellipse cx="199.9" cy="968.6" rx="7.4" ry="4.0"/><ellipse cx="153.6" cy="915.8" rx="3.5" ry="3.6"/><ellipse cx="123.3" cy="881.5" rx="4.0" ry="2.4"/><ellipse cx="122.6" cy="910.4" rx="3.0" ry="2.4"/><ellipse cx="147.1" cy="885.6" rx="3.1" ry="4.2"/><ellipse cx="132.3" cy="938.9" rx="4.3" ry="2.9"/><ellipse cx="128.9" cy="912.9" rx="7.2" ry="4.5"/><ellipse cx="162.3" cy="923.5" rx="3.4" ry="2.3"/><ellipse cx="141.2" cy="910.6" rx="7.1" ry="2.4"/><ellipse cx="191.9" cy="877.4" rx="5.6" ry="2.4"/><ellipse cx="120.5" cy="931.5" rx="5.6" ry="4.4"/><ellipse cx="190.4" cy="964.8" rx="4.3" ry="2.9"/><ellipse cx="181.5" cy="892.4" rx="5.7" ry="3.9"/><ellipse cx="137.5" cy="909.3" rx="7.1" ry="4.5"/><ellipse cx="201.5" cy="963.7" rx="7.1" ry="3.8"/><ellipse cx="161.5" cy="898.6" rx="4.8" ry="2.1"/><ellipse cx="139.8" cy="877.9" rx="4.3" ry="3.7"/><ellipse cx="165.8" cy="974.5" rx="7.7" ry="4.5"/><ellipse cx="156.9" cy="974.3" rx="4.1" ry="2.6"/><ellipse cx="135.0" cy="895.5" rx="6.1" ry="4.3"/><ellipse cx="167.5" cy="962.4" rx="6.3" ry="4.0"/><ellipse cx="170.6" cy="883.8" rx="7.5" ry="4.0"/><ellipse cx="166.0" cy="953.0" rx="3.9" ry="4.0"/><ellipse cx="188.0" cy="909.6" rx="7.9" ry="3.0"/><ellipse cx="202.8" cy="916.7" rx="6.6" ry="2.4"/><ellipse cx="130.2" cy="888.2" rx="7.5" ry="4.0"/><ellipse cx="185.4" cy="890.2" rx="7.9" ry="3.6"/><ellipse cx="166.2" cy="911.4" rx="3.7" ry="2.0"/><ellipse cx="187.7" cy="976.0" rx="5.6" ry="4.3"/><ellipse cx="196.9" cy="920.1" rx="7.1" ry="2.5"/><ellipse cx="142.9" cy="901.2" rx="4.2" ry="3.5"/><ellipse cx="153.7" cy="902.0" rx="3.7" ry="4.3"/><ellipse cx="158.3" cy="911.8" rx="5.9" ry="4.3"/><ellipse cx="200.7" cy="918.7" rx="5.5" ry="3.3"/><ellipse cx="119.7" cy="929.4" rx="5.2" ry="2.5"/><ellipse cx="179.6" cy="875.4" rx="3.9" ry="3.2"/><ellipse cx="173.4" cy="950.4" rx="4.6" ry="3.3"/><ellipse cx="192.0" cy="932.8" rx="3.5" ry="3.4"/><ellipse cx="141.5" cy="900.8" rx="6.9" ry="3.3"/><ellipse cx="189.8" cy="933.4" rx="7.6" ry="3.1"/><ellipse cx="166.6" cy="938.7" rx="5.6" ry="3.7"/></g>
    <g fill="#dfe3ec" opacity="0.35"><ellipse cx="250.7" cy="938.5" rx="3.4" ry="2.9"/><ellipse cx="273.7" cy="956.7" rx="4.8" ry="1.9"/><ellipse cx="278.2" cy="946.4" rx="4.5" ry="1.7"/><ellipse cx="244.6" cy="914.0" rx="2.2" ry="1.9"/><ellipse cx="259.9" cy="910.4" rx="4.4" ry="2.8"/><ellipse cx="263.0" cy="916.4" rx="4.0" ry="1.7"/><ellipse cx="279.8" cy="970.3" rx="2.7" ry="2.9"/><ellipse cx="247.6" cy="934.5" rx="5.0" ry="2.7"/><ellipse cx="243.9" cy="916.9" rx="3.5" ry="2.0"/><ellipse cx="236.3" cy="919.5" rx="4.2" ry="1.5"/><ellipse cx="244.5" cy="946.0" rx="2.1" ry="2.0"/><ellipse cx="249.3" cy="951.2" rx="2.2" ry="3.0"/><ellipse cx="280.1" cy="963.3" rx="2.3" ry="1.9"/><ellipse cx="267.2" cy="907.9" rx="2.8" ry="1.7"/><ellipse cx="276.1" cy="936.2" rx="4.5" ry="1.9"/><ellipse cx="276.6" cy="916.1" rx="3.7" ry="2.6"/><ellipse cx="218.9" cy="911.6" rx="4.1" ry="2.1"/><ellipse cx="277.9" cy="910.4" rx="3.9" ry="2.7"/><ellipse cx="272.4" cy="911.2" rx="2.2" ry="2.8"/><ellipse cx="237.7" cy="938.6" rx="3.7" ry="2.9"/><ellipse cx="223.7" cy="924.8" rx="3.6" ry="1.9"/><ellipse cx="225.8" cy="913.1" rx="2.2" ry="1.8"/><ellipse cx="235.4" cy="928.1" rx="4.3" ry="1.9"/><ellipse cx="226.9" cy="942.0" rx="3.0" ry="1.5"/><ellipse cx="216.0" cy="923.5" rx="4.2" ry="2.3"/><ellipse cx="246.8" cy="919.0" rx="4.8" ry="1.7"/><ellipse cx="244.0" cy="965.6" rx="3.5" ry="2.8"/><ellipse cx="248.9" cy="934.1" rx="4.1" ry="3.0"/><ellipse cx="270.8" cy="930.4" rx="4.1" ry="2.5"/><ellipse cx="238.3" cy="934.9" rx="2.2" ry="1.7"/></g>
    <path d="M305.5,979 L305.5,956 M299,966 L312,962 M300,972 L311,970 M477,979 L478.5,942 M471,952 L485,950 M472,962 L484,960 M470,971 L485,969" stroke="#3f4454" stroke-width="1.6" fill="none"/>
    </g>
  </svg>
  <!-- media controls -->
  <div class="a" style="left:132px;top:1016px;width:96px;height:40px;border-radius:8px;background:#fff;box-shadow:0 1px 1.5px rgba(0,0,0,.28)"></div>
  <svg class="a" style="left:168px;top:1026px" width="26" height="18"><path d="M0,9 L9,1 V17 Z M9,9 L18,1 V17 Z M18,2 H22 V16 H18 Z" fill="#1a1a1a"/></svg>
  <div class="a" style="left:260px;top:1016px;width:96px;height:40px;border-radius:8px;background:#fff;box-shadow:0 1px 1.5px rgba(0,0,0,.28)"></div>
  <svg class="a" style="left:300px;top:1023px" width="18" height="22"><path d="M0,0 L17.5,10.5 L0,21 Z" fill="#1a1a1a"/></svg>
  <div class="a" style="left:386px;top:1008px;width:52px;height:52px;border:2px solid #a5a5a5;background:linear-gradient(#f4f4f4,#e6e6e6)"></div>
  <svg class="a" style="left:394px;top:1018px" width="40" height="38">
    <defs><linearGradient id="gSpk" x1="0" x2="1"><stop offset="0" stop-color="#e0e0e0"/><stop offset="1" stop-color="#6a6a6a"/></linearGradient></defs>
    <path d="M2,8 H9 L17,1 V27 L9,20 H2 Z" fill="url(#gSpk)" stroke="#888" stroke-width="0.8"/>
    <path d="M20.5,8 Q24,14 20.5,20 M24.5,5.5 Q29,14 24.5,22.5 M28.5,3 Q34,14 28.5,25" stroke="#7a9cc0" stroke-width="2" fill="none"/>
    <path d="M26,24 L31,29 L37,23" stroke="#1a1a1a" stroke-width="2.4" fill="none"/>
  </svg>
  <div class="a" style="left:487px;top:1026px;width:148px;height:8px;border-radius:4px;background:#d5d5d5"></div>
  <div class="a" style="left:468px;top:1011px;width:38px;height:38px;border-radius:50%;background:#fff;box-shadow:0 1px 2px rgba(0,0,0,.3)"></div>
  <div class="t" style="left:664.5px;top:1020.4px;font-size:27.7px;color:#111">00:00 / 00:15</div>
  <!-- ============ bottom tabs ============ -->
  <div class="a" style="left:113px;top:1128px;width:117px;height:20px;background:#e3e3e3;border-radius:0 0 10px 10px"></div>
  <div class="a" style="left:724px;top:1128px;width:116px;height:20px;background:#e3e3e3;border-radius:0 0 10px 10px"></div>
  <div class="a" style="left:250px;top:1087px;width:450px;height:40px;border-radius:10px;background:#fff"></div>
  <div class="a blue" style="left:250px;top:1087px;width:138px;height:40px;border-radius:10px 0 0 10px"></div>
  <div class="a" style="left:559px;top:1088px;width:1px;height:38px;background:#dedede"></div>
  <div class="t" style="left:269.6px;top:1094.6px;font-size:26.1px;color:#fff">Preview</div>
  <div class="t" style="left:413.4px;top:1093.8px;font-size:27px">Properties</div>
  <div class="t" style="left:587.5px;top:1094.4px;font-size:26.3px">ExifTool</div>
  <div class="a" style="left:236px;top:1129px;width:482px;height:40px;border-radius:10px;background:#fff"></div>
  <div class="a blue" style="left:236px;top:1129px;width:88px;height:40px;border-radius:10px 0 0 10px"></div>
  <div class="a" style="left:502px;top:1130px;width:1px;height:38px;background:#dedede"></div>
  <div class="t" style="left:255px;top:1136.5px;font-size:26px;color:#fff">Info</div>
  <div class="t" style="left:349px;top:1135.8px;font-size:26.8px">Categories</div>
  <div class="t" style="left:529px;top:1135.9px;font-size:26.7px">Category Sets</div>
  <!-- ============ splitter ============ -->
  <div class="a" style="left:840px;top:247px;width:3px;height:923px;background:#9b9b9b;border-right:1px solid #d5d5d5"></div>
  <!-- ============ right panel ============ -->
  <div class="a" style="left:908px;top:257px;width:784px;height:40px;border-radius:9px;background:#fff;box-shadow:0 0 0 1px #d6d6d6, 0 1px 1px rgba(0,0,0,.18)"></div>
  <div class="t" style="left:912.6px;top:262.5px;font-size:26.8px;color:#000">/Volumes/DATA/testFolder/</div>
  <div class="a blue" style="left:1656px;top:261px;width:32px;height:32px;border-radius:7px"></div>
  <svg class="a" style="left:1663px;top:271px" width="18" height="12"><path d="M2,2 L9,9 L16,2" stroke="#fff" stroke-width="3" fill="none"/></svg>
  <div class="a" style="left:1784px;top:256px;width:257px;height:39px;background:#fff;border:1px solid #d2d2d2;border-right:none;box-shadow:0 1px 0 #b9b9b9"></div>
  <div class="t" style="left:1839px;top:263px;font-size:27.3px;color:#818181">Quick filter</div>
  <div class="a" style="left:1597px;top:325px;width:381px;height:8px;border-radius:4px;background:#dcdcdc"></div>
  <div class="a" style="left:1582px;top:308px;width:44px;height:44px;overflow:hidden"><div class="a" style="left:-6px;top:2px;width:38px;height:38px;border-radius:50%;background:#fff;box-shadow:0 1px 2px rgba(0,0,0,.25)"></div></div>
  <svg class="a" style="left:843px;top:247px" width="1199" height="109" viewBox="843 247 1199 109">
    <defs>
      <linearGradient id="rGrn" x1="0" y1="0" x2="0" y2="1"><stop offset="0" stop-color="#d0f800"/><stop offset="1" stop-color="#3c8e00"/></linearGradient>
      <linearGradient id="rLav" x1="0" y1="0" x2="0" y2="1"><stop offset="0" stop-color="#f0f2ff"/><stop offset="0.5" stop-color="#b4b4ec"/><stop offset="1" stop-color="#6a6ab4"/></linearGradient>
      <linearGradient id="rLav2" x1="0" y1="0" x2="0" y2="1"><stop offset="0" stop-color="#eeeeff"/><stop offset="1" stop-color="#a8a8dc"/></linearGradient>
      <linearGradient id="rFold" x1="0" y1="0" x2="0" y2="1"><stop offset="0" stop-color="#ffe890"/><stop offset="1" stop-color="#f0b040"/></linearGradient>
      <linearGradient id="rRed" x1="0" y1="0" x2="0" y2="1"><stop offset="0" stop-color="#f49a9a"/><stop offset="1" stop-color="#c81e1e"/></linearGradient>
      <linearGradient id="rGold" x1="0" y1="0" x2="1" y2="0"><stop offset="0" stop-color="#f09000"/><stop offset="0.5" stop-color="#ffe060"/><stop offset="1" stop-color="#f0a000"/></linearGradient>
      <linearGradient id="rStar" x1="0" y1="0" x2="0" y2="1"><stop offset="0" stop-color="#fff0a0"/><stop offset="1" stop-color="#f0b020"/></linearGradient>
    </defs>
    <!-- parent arrow -->
    <path d="M865,262.7 L877.2,275.6 H868.6 Q868.6,283.5 874,285 Q878,285.5 880.9,280.3 Q879.5,290 870,290 Q859,290 859,278 V275.6 H852.7 Z" fill="url(#rGrn)" stroke="#3a8a00" stroke-width="0.9"/>
    <!-- back / forward -->
    <path d="M855,331.5 L869.2,318 V325.3 H880.5 V337.7 H869.2 V345 Z" fill="url(#rLav)" stroke="#32328a" stroke-width="1.1"/>
    <path d="M940.8,331.5 L926.6,318 V325.3 H915.3 V337.7 H926.6 V345 Z" fill="url(#rLav2)" stroke="#9a9ad0" stroke-width="1"/>
    <!-- new folder -->
    <path d="M983,324 Q983,321 986,321 H993 L995.5,324.5 H1004.5 Q1007.5,324.5 1007.5,327.5 V340.7 Q1007.5,343.7 1004.5,343.7 H986 Q983,343.7 983,340.7 Z" fill="#e8a838" stroke="#b07818" stroke-width="0.9"/>
    <path d="M984.5,330 H1007.5 V340.7 Q1007.5,343.7 1004.5,343.7 H987 Q984.5,343.7 984.5,341 Z" fill="url(#rFold)"/>
    <path d="M1005,317.5 L1006.5,322 L1011,319.5 L1008,323.5 L1012,325 L1007.5,326 L1009,330.5 L1005,327.5 L1001.5,331 L1002.5,326 L998,325.5 L1002,323.5 L999.5,319 L1003.5,321.5 Z" fill="#d42020"/>
    <circle cx="1005" cy="324.3" r="2.2" fill="#ff7070"/>
    <!-- rename -->
    <rect x="1040.5" y="325.3" width="26.5" height="13.4" rx="1" fill="#fff" stroke="#8080c8" stroke-width="1"/>
    <path d="M1044,328 V336 M1042.5,328 H1045.5 M1042.5,336 H1045.5" stroke="#222" stroke-width="0.9"/>
    <path d="M1044,345.8 L1046,339 L1066,321 L1070.5,325.5 L1050.5,343.5 Z" fill="#f0c040" stroke="#b08020" stroke-width="0.7"/>
    <path d="M1066,321 L1068.5,318.5 Q1071,317 1073,319.5 Q1074,321.5 1072.5,323.5 L1070.5,325.5 Z" fill="#e06060"/>
    <path d="M1064.5,322.5 L1069,327" stroke="#6a7ac0" stroke-width="2"/>
    <!-- delete -->
    <path d="M1103.5,323.5 L1108,318.8 L1116.2,327 L1124.4,318.8 L1129,323.5 L1120.8,331.8 L1129,340 L1124.4,344.8 L1116.2,336.5 L1108,344.8 L1103.5,340 L1111.6,331.8 Z" fill="url(#rRed)" stroke="#a82020" stroke-width="0.8"/>
    <!-- view -->
    <rect x="1168.5" y="317.5" width="31" height="29" rx="1" fill="#fff" stroke="#3a3a80" stroke-width="1.1"/>
    <rect x="1168.5" y="317.5" width="31" height="2.5" fill="#6c6cb4"/>
    <rect x="1171" y="321.5" width="26" height="23" fill="#e2e6ea"/>
    <g fill="#5a5ae0"><rect x="1174" y="325" width="4" height="4"/><rect x="1182" y="325" width="4" height="4"/><rect x="1190" y="325" width="4" height="4"/><rect x="1174" y="335" width="4" height="4"/><rect x="1182" y="335" width="4" height="4"/><rect x="1190" y="335" width="4" height="4"/></g>
    <g fill="#b8bcd8"><rect x="1174" y="331" width="4" height="0.8"/><rect x="1182" y="331" width="4" height="0.8"/><rect x="1190" y="331" width="4" height="0.8"/><rect x="1174" y="341" width="4" height="0.8"/><rect x="1182" y="341" width="4" height="0.8"/><rect x="1190" y="341" width="4" height="0.8"/></g>
    <path d="M1216.5,331 L1222,336.5 L1227.5,331" stroke="#222" stroke-width="2.6" fill="none"/>
    <!-- sort -->
    <path d="M1273.2,316 L1284,327.4 H1279 V337 H1268 V327.4 H1262 Z" fill="url(#rGrn)" stroke="#3a8a00" stroke-width="0.9"/>
    <path d="M1281.9,345.7 L1292.8,335.3 H1287 V327.5 H1276 V335.3 H1271 Z" fill="url(#rGrn)" stroke="#3a8a00" stroke-width="0.9"/>
    <path d="M1310.5,331 L1316,336.5 L1321.5,331" stroke="#222" stroke-width="2.6" fill="none"/>
    <!-- funnel -->
    <path d="M1344.5,320 Q1356,314 1367.5,320 L1358.5,336 V347 H1354 V336 Z" fill="url(#rGold)" stroke="#d08000" stroke-width="0.8"/>
    <ellipse cx="1356" cy="320" rx="11.5" ry="3.2" fill="#f8a800" stroke="#e08800" stroke-width="0.8"/>
    <ellipse cx="1356" cy="320.6" rx="9" ry="2" fill="#ffd070"/>
    <path d="M1388.5,331 L1394,336.5 L1399.5,331" stroke="#222" stroke-width="2.6" fill="none"/>
    <!-- favorites star -->
    <path d="M1728,261 L1732,271.5 L1743,272 L1734.5,279 L1737.5,290 L1728,284 L1718.5,290 L1721.5,279 L1713,272 L1724,271.5 Z" fill="url(#rStar)" stroke="#c88010" stroke-width="0.9" stroke-linejoin="round"/>
    <path d="M1760,275 L1766,281 L1772,275" stroke="#222" stroke-width="2.6" fill="none"/>
    <!-- magnifier -->
    <path d="M1799,287 L1810,276" stroke="#8a4a10" stroke-width="5.5" stroke-linecap="square"/>
    <circle cx="1815" cy="270" r="8.5" fill="#c8ecff" stroke="#2a8ae0" stroke-width="2.4"/>
    <!-- zoom fit icon -->
    <rect x="2001" y="321" width="26" height="23" fill="none" stroke="#2f2f9a" stroke-width="1.6"/>
    <rect x="2000" y="330" width="16" height="14.5" fill="#3a3aa0"/>
    <rect x="2016" y="322" width="10.5" height="20" fill="#ececec"/>
    <path d="M2026.5,321 V344 H2018" stroke="#2f2f9a" stroke-width="1.6" fill="none"/>
  </svg>
  <!-- grid container -->
  <div class="a" style="left:844px;top:356px;width:1198px;height:813px;background:#fff;border-top:1px solid #9a9a9a;border-left:1px solid #a0a0a0;border-right:2px solid #b0b0b0;border-bottom:1px solid #b3b3b3"></div>
  <div class="a" style="left:846px;top:358px;width:1111px;height:713px;background:#a9a9a9"></div>
  <div id="grid">
    <div class="cell" style="left:847px;top:359px;width:368px;height:325px"></div>
    <div class="cell" style="left:1217px;top:359px;width:368px;height:325px"></div>
    <div class="cell" style="left:1587px;top:359px;width:368px;height:325px"></div>
    <div class="lbl" style="left:847px;top:684px;width:368px;background:#d3d3d3">..</div>
    <div class="lbl" style="left:1217px;top:684px;width:368px;background:#d3d3d3">CASCO 50x50 (for-TV).mpg</div>
    <div class="lbl" style="left:1587px;top:684px;width:368px;background:#d3d3d3;font-size:21.2px">casco2.avi</div>
    <div class="cell" style="left:847px;top:715px;width:368px;height:325px;background:#e0e0e0"></div>
    <div class="cell" style="left:1217px;top:715px;width:368px;height:325px"></div>
    <div class="cell" style="left:1587px;top:715px;width:368px;height:325px"></div>
    <div class="lbl" style="left:847px;top:1040px;width:368px;background:#0064e0;color:#fff;font-size:21.4px">GOPR0008(1).mp4</div>
    <div class="lbl" style="left:1217px;top:1040px;width:368px;background:#d3d3d3;font-size:20.9px">IMG_1857.MOV</div>
    <div class="lbl" style="left:1587px;top:1040px;width:368px;background:#e8e0dd;text-align:left;padding-left:8px;font-size:22.8px">Screenshot 2023-10-02 at 20.56....</div>
    <svg class="a" style="left:1313px;top:402px" width="181" height="241" viewBox="0 0 181 241"><use href="#doc"/><text x="90.5" y="216" font-family="Liberation Sans" font-size="33" fill="#7a7a7a" text-anchor="middle">MPG</text></svg>
    <svg class="a" style="left:1683px;top:402px" width="181" height="241" viewBox="0 0 181 241"><use href="#doc"/><text x="90.5" y="216" font-family="Liberation Sans" font-size="33" fill="#7a7a7a" text-anchor="middle">AVI</text></svg>
    <svg class="a" style="left:943px;top:758px" width="181" height="241" viewBox="0 0 181 241"><use href="#doc"/><text x="90.5" y="216" font-family="Liberation Sans" font-size="33" fill="#7a7a7a" text-anchor="middle">MP4</text></svg>
    <svg class="a" style="left:1313px;top:758px" width="181" height="241" viewBox="0 0 181 241"><use href="#doc"/><text x="90.5" y="216" font-family="Liberation Sans" font-size="33" fill="#7a7a7a" text-anchor="middle">MOV</text></svg>
    <svg class="a" style="left:847px;top:359px" width="1109" height="711" viewBox="847 359 1109 711">
      <defs>
        <linearGradient id="uGrn" x1="0.2" y1="0" x2="0.6" y2="1"><stop offset="0" stop-color="#d4ff00"/><stop offset="0.45" stop-color="#a8e000"/><stop offset="1" stop-color="#4a9800"/></linearGradient>
        <filter id="shd" x="-10%" y="-10%" width="130%" height="130%"><feGaussianBlur stdDeviation="2.5"/></filter>
      </defs>
      <path d="M1020,471 L1068,521 H1036 Q1036,550 1052,558 Q1064,563 1077,552.6 Q1064,576 1038,575.4 Q1012,574 1003,552 Q998.4,540 998.4,521 H972 Z" fill="#000" opacity="0.25" filter="url(#shd)"/>
      <path d="M1020,468.7 L1068,519 H1036 Q1036,548 1052,556 Q1064,561 1077,550.6 Q1064,574 1038,573.4 Q1012,572 1003,550 Q998.4,538 998.4,519 H972 Z" fill="url(#uGrn)" stroke="#3a7c00" stroke-width="1.4"/>
      <!-- star & circle GOPR -->
      <path d="M909,738.5 L911.8,746 L920,746.3 L913.6,751.3 L915.9,759 L909,754.5 L902.1,759 L904.4,751.3 L898,746.3 L906.2,746 Z" fill="#f4f4f4" stroke="#6a6a6a" stroke-width="1"/>
      <circle cx="936.6" cy="749" r="10.8" fill="#f2f2f2" stroke="#7a7a7a" stroke-width="1"/>
      <!-- screenshot thumb frame -->
      <rect x="1608" y="771" width="329" height="216" fill="#000" opacity="0.2" filter="url(#shd)"/>
      <rect x="1607.5" y="769" width="329.5" height="215.5" fill="#ebebeb" stroke="#fafafa" stroke-width="2"/>
      <rect x="1632" y="790" width="282" height="168" rx="3" fill="#000" opacity="0.25" filter="url(#shd)"/>
      <g transform="translate(1630.6,787.7) scale(0.1466)">
        <rect x="0" y="0" width="1930" height="1142" rx="20" fill="#ececec"/>
        <rect x="0" y="0" width="1930" height="57" fill="#f6f3ee"/>
        <circle cx="28" cy="27" r="13" fill="#ee6a5f"/><circle cx="68" cy="27" r="13" fill="#f5bd4f"/><circle cx="108" cy="27" r="13" fill="#61c554"/>
        <rect x="700" y="15" width="530" height="24" fill="#4c4c4c" opacity="0.45"/>
        <rect x="876" y="57" width="180" height="40" rx="10" fill="#1a84f8"/>
        <rect x="0" y="98" width="1930" height="72" fill="#dcdcdc"/>
        <g fill="#f0a000"><rect x="36" y="112" width="44" height="38"/><rect x="794" y="112" width="48" height="40"/><rect x="870" y="112" width="48" height="40"/><rect x="1022" y="112" width="48" height="44"/></g>
        <g fill="#7878c8"><rect x="112" y="112" width="44" height="40"/><rect x="480" y="114" width="32" height="38"/><rect x="645" y="116" width="42" height="36"/><rect x="720" y="112" width="44" height="44"/><rect x="949" y="112" width="42" height="44"/><rect x="1270" y="110" width="48" height="48"/><rect x="1601" y="112" width="46" height="46"/><rect x="1679" y="113" width="40" height="40"/></g>
        <g fill="#90c840"><rect x="211" y="115" width="38" height="38"/><rect x="287" y="115" width="38" height="38"/><rect x="366" y="112" width="48" height="46"/><rect x="1776" y="110" width="44" height="46"/></g>
        <rect x="1" y="171" width="727" height="148" fill="#fff"/>
        <rect x="2" y="198" width="586" height="40" fill="#dcdcdc"/>
        <g fill="#333" opacity="0.55"><rect x="176" y="212" width="122" height="18"/><rect x="137" y="252" width="200" height="18"/><rect x="137" y="292" width="165" height="18"/></g>
        <rect x="118" y="321" width="494" height="40" rx="10" fill="#fff"/><rect x="118" y="321" width="132" height="40" rx="10" fill="#1a84f8"/>
        <rect x="6" y="370" width="718" height="116" fill="#000"/>
        <rect x="6" y="486" width="718" height="431" fill="#c6cad2"/>
        <ellipse cx="290" cy="760" rx="140" ry="75" fill="#6a7890" opacity="0.7"/>
        <ellipse cx="150" cy="600" rx="120" ry="60" fill="#e8eaee" opacity="0.6"/>
        <ellipse cx="560" cy="650" rx="140" ry="80" fill="#e4e6ea" opacity="0.5"/>
        <rect x="20" y="940" width="96" height="40" rx="8" fill="#fff"/><rect x="148" y="940" width="96" height="40" rx="8" fill="#fff"/>
        <rect x="553" y="950" width="160" height="20" fill="#444" opacity="0.5"/>
        <rect x="138" y="1011" width="450" height="40" rx="10" fill="#fff"/><rect x="138" y="1011" width="138" height="40" rx="10" fill="#1a84f8"/>
        <rect x="124" y="1053" width="482" height="40" rx="10" fill="#fff"/><rect x="124" y="1053" width="88" height="40" rx="10" fill="#1a84f8"/>
        <rect x="728" y="171" width="3" height="923" fill="#9b9b9b"/>
        <rect x="796" y="181" width="785" height="40" rx="9" fill="#fff"/>
        <rect x="732" y="280" width="1198" height="814" fill="#fff"/>
        <g fill="#e9e9e9"><rect x="735" y="283" width="368" height="325"/><rect x="1105" y="283" width="368" height="325"/><rect x="1475" y="283" width="368" height="325"/><rect x="735" y="639" width="368" height="325"/><rect x="1105" y="639" width="368" height="325" fill="#dedede"/></g>
        <g fill="#d3d3d3"><rect x="735" y="608" width="368" height="30"/><rect x="1105" y="608" width="368" height="30"/><rect x="1475" y="608" width="368" height="30"/><rect x="735" y="964" width="368" height="30"/></g>
        <rect x="1105" y="964" width="368" height="30" fill="#0064e0"/>
        <g fill="#f4f4f4"><rect x="1201" y="326" width="181" height="239"/><rect x="1571" y="326" width="181" height="239"/><rect x="831" y="682" width="181" height="239"/><rect x="1201" y="682" width="181" height="239"/></g>
        <g fill="#1a1a1a"><rect x="1237" y="386" width="108" height="108" rx="25"/><rect x="1607" y="386" width="108" height="108" rx="25"/><rect x="867" y="742" width="108" height="108" rx="25"/><rect x="1237" y="742" width="108" height="108" rx="25"/></g>
        <g fill="#2a9af0"><circle cx="1291" cy="440" r="40"/><circle cx="1661" cy="440" r="40"/><circle cx="921" cy="796" r="40"/><circle cx="1291" cy="796" r="40"/></g>
        <path d="M908,393 L956,443 H924 Q924,472 940,480 Q952,485 965,474.6 Q952,498 926,497.4 Q900,496 891,474 Q886.4,462 886.4,443 H860 Z" fill="#7ac800"/>
        <rect x="0" y="1094" width="1930" height="48" fill="#d0d0d0"/>
      </g>
    </svg>
    <svg class="a" style="left:1830px;top:1002px" width="105" height="22" viewBox="1830 1002 105 22">
      <g fill="#6a6aa2" stroke="#a0a0cc" stroke-width="1"><rect x="1831" y="1003.5" width="26" height="18.5"/><rect x="1865" y="1003.5" width="27" height="18.5"/><rect x="1899" y="1003.5" width="34" height="18.5"/></g>
      <g fill="#fff" font-family="Liberation Sans" font-weight="bold" font-size="16">
        <text x="1833" y="1019" textLength="22" lengthAdjust="spacingAndGlyphs">ICC</text>
        <text x="1866.5" y="1019" textLength="24" lengthAdjust="spacingAndGlyphs">XMP</text>
        <text x="1901" y="1019" textLength="30" lengthAdjust="spacingAndGlyphs">EXIF</text>
      </g>
    </svg>
    <div class="cb" style="left:1240px;top:382px"></div>
    <div class="cb" style="left:1610px;top:382px"></div>
    <div class="cb" style="left:870px;top:738px;background:#f0f0f0"></div>
    <div class="cb" style="left:1240px;top:738px"></div>
    <div class="cb" style="left:1610px;top:738px"></div>
  </div>
  <!-- ============ status bar ============ -->
  <div class="a" style="left:112px;top:1169px;width:1930px;height:49px;background:linear-gradient(#e9e9e9,#b3b3b3);border-top:1px solid #e4e4e4"></div>
  <div class="a" style="left:112px;top:1170px;width:1930px;height:1px;background:#7a7a7a"></div>
  <div class="t" style="left:118px;top:1183.3px;font-size:22.2px">5 object(s) / 1 object(s) selected [69.98 MiB]</div>
  <div class="t" style="left:568.3px;top:1183.5px;font-size:21px">GOPR0008(1).mp4</div>
  <div class="t" style="left:767.8px;top:1183.5px;font-size:21.5px">69.98 MiB</div>
  <div class="t" style="left:884px;top:1183.5px;font-size:21px">1/24/14 - 17:24:20 EDT</div>
  <div class="a" style="left:112px;top:76px;width:1930px;height:1142px;border:1px solid rgba(255,255,255,0.6);border-radius:17px"></div>
</div>
</body></html>
